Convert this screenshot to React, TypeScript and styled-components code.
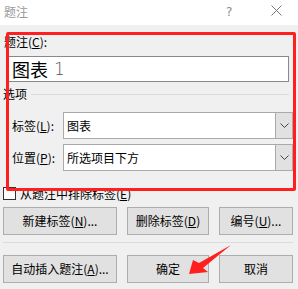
import React from "react";
import styled, { createGlobalStyle } from "styled-components";

const Global = createGlobalStyle`
  html, body { margin: 0; padding: 0; background: #f0f0f0; }
  body { font-family: "Noto Sans CJK SC", "Noto Sans", sans-serif; font-size: 12px; color: #000; }
  * { box-sizing: border-box; }
`;

const Window = styled.div`
  position: relative;
  width: 298px;
  height: 289px;
  background: #f0f0f0;
  overflow: hidden;
`;

const TitleBar = styled.div`
  height: 25px;
  background: #fff;
  display: flex;
  align-items: center;
  padding-left: 4px;
  color: #9a9a9a;
  font-size: 12px;
  line-height: 14px;
`;

const TitleText = styled.span`
  flex: 1;
  margin-top: -1px;
`;

const Help = styled.span`
  font-family: "DejaVu Sans", sans-serif;
  font-size: 12px;
  color: #8a8a8a;
  width: 10px;
  margin-right: 35px;
  margin-top: -2px;
`;

const Close = styled.svg`
  margin-right: 16px;
  margin-top: -4px;
`;

const Body = styled.div`
  display: flex;
  flex-direction: column;
  padding: 0 5px 0 3px;
`;

const Label = styled.div<{ $mt?: number; $ml?: number }>`
  line-height: 16px;
  height: 16px;
  margin-top: ${(p) => p.$mt ?? 0}px;
  margin-left: ${(p) => p.$ml ?? 0}px;
  white-space: nowrap;
`;

const TextInput = styled.div`
  margin: 6px 4px 0 5px;
  height: 26px;
  background: #fff;
  border: 1px solid #868a90;
  display: flex;
  align-items: center;
  padding-left: 3px;
  font-size: 18px;
  line-height: 22px;
`;

const Num = styled.span`
  font-family: "DejaVu Sans", sans-serif;
  font-weight: 300;
  color: #555;
  font-size: 17px;
  margin-left: 6px;
`;

const Section = styled.div`
  display: flex;
  align-items: center;
  gap: 4px;
  margin-top: 4px;
  margin-right: 4px;
  line-height: 16px;
`;

const Rule = styled.div`
  flex: 1;
  height: 1px;
  background: #dadada;
  margin-top: 1px;
`;

const FieldRow = styled.div<{ $mt: number }>`
  display: flex;
  align-items: center;
  margin-top: ${(p) => p.$mt}px;
  height: 27px;
`;

const FieldLabel = styled.div`
  width: 60px;
  padding-left: 9px;
  line-height: 16px;
`;

const Combo = styled.div`
  flex: 1;
  height: 27px;
  display: flex;
  background: #fff;
  border: 1px solid #aaaaaa;
`;

const ComboText = styled.div`
  flex: 1;
  padding-left: 3px;
  display: flex;
  align-items: center;
  line-height: 16px;
`;

const ComboButton = styled.div`
  width: 17px;
  background: #e1e1e1;
  border-left: 1px solid #aaaaaa;
  display: flex;
  align-items: center;
  justify-content: center;
`;

const CheckRow = styled.div`
  display: flex;
  align-items: center;
  gap: 4px;
  margin-top: 16px;
  height: 13px;
  line-height: 14px;
`;

const Box = styled.div`
  width: 13px;
  height: 13px;
  border: 1px solid #333;
  background: #fff;
`;

const ButtonRow = styled.div<{ $mt: number }>`
  display: flex;
  gap: 10px;
  margin-top: ${(p) => p.$mt}px;
`;

const Button = styled.div<{ $w: number }>`
  width: ${(p) => p.$w}px;
  height: 28px;
  background: #e1e1e1;
  border: 1px solid #adadad;
  display: flex;
  align-items: center;
  justify-content: center;
  line-height: 16px;
  white-space: nowrap;
`;

const Separator = styled.div`
  height: 1px;
  background: #dcdcdc;
  margin-top: 7px;
`;

const Highlight = styled.div`
  position: absolute;
  left: 6px;
  top: 32px;
  width: 290px;
  height: 159px;
  border: 3px solid #ff1f1f;
  border-radius: 2px;
  pointer-events: none;
`;

const Arrow = styled.svg`
  position: absolute;
  left: 0;
  top: 0;
  pointer-events: none;
`;

const Chevron = () => (
  <svg width="9" height="5" viewBox="0 0 9 5">
    <polyline points="0.5,0.5 4.5,4.5 8.5,0.5" fill="none" stroke="#444" strokeWidth="1" />
  </svg>
);

export default function App() {
  return (
    <Window>
      <Global />
      <TitleBar>
        <TitleText>题注</TitleText>
        <Help>?</Help>
        <Close width="11" height="11" viewBox="0 0 11 11">
          <line x1="0.5" y1="0.5" x2="10.5" y2="10.5" stroke="#777" strokeWidth="1" />
          <line x1="10.5" y1="0.5" x2="0.5" y2="10.5" stroke="#777" strokeWidth="1" />
        </Close>
      </TitleBar>
      <Body>
        <Label $mt={9} $ml={1}>
          题注(<u>C</u>):
        </Label>
        <TextInput>
          图表<Num>1</Num>
        </TextInput>
        <Section>
          <span>选项</span>
          <Rule />
        </Section>
        <FieldRow $mt={10}>
          <FieldLabel>
            标签(<u>L</u>):
          </FieldLabel>
          <Combo>
            <ComboText>图表</ComboText>
            <ComboButton>
              <Chevron />
            </ComboButton>
          </Combo>
        </FieldRow>
        <FieldRow $mt={5}>
          <FieldLabel>
            位置(<u>P</u>):
          </FieldLabel>
          <Combo>
            <ComboText>所选项目下方</ComboText>
            <ComboButton>
              <Chevron />
            </ComboButton>
          </Combo>
        </FieldRow>
        <CheckRow>
          <Box />
          <span>
            从题注中排除标签(<u>E</u>)
          </span>
        </CheckRow>
        <ButtonRow $mt={7}>
          <Button $w={114}>
            新建标签(<u>N</u>)...
          </Button>
          <Button $w={82}>
            删除标签(<u>D</u>)
          </Button>
          <Button $w={74}>
            编号(<u>U</u>)...
          </Button>
        </ButtonRow>
        <Separator />
        <ButtonRow $mt={12}>
          <Button $w={114}>
            自动插入题注(<u>A</u>)...
          </Button>
          <Button $w={82}>确定</Button>
          <Button $w={74}>取消</Button>
        </ButtonRow>
      </Body>
      <Highlight />
      <Arrow width="298" height="289" viewBox="0 0 298 289">
        <polygon
          points="189,274 193,260 199,263 231,245 203,268 208,272"
          fill="#ff1f1f"
        />
      </Arrow>
    </Window>
  );
}
